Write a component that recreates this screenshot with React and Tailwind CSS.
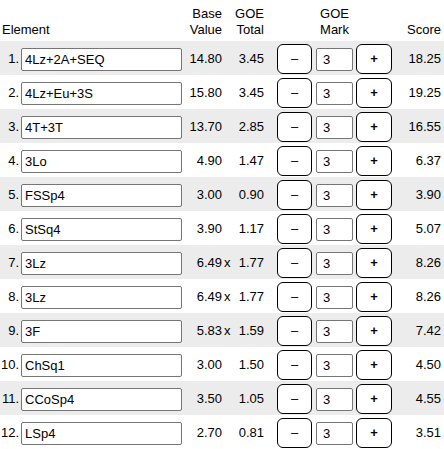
import React from 'react';

const rows = [
    { el: '4Lz+2A+SEQ', base: '14.80', x: false, goe: '3.45', score: '18.25' },
    { el: '4Lz+Eu+3S', base: '15.80', x: false, goe: '3.45', score: '19.25' },
    { el: '4T+3T', base: '13.70', x: false, goe: '2.85', score: '16.55' },
    { el: '3Lo', base: '4.90', x: false, goe: '1.47', score: '6.37' },
    { el: 'FSSp4', base: '3.00', x: false, goe: '0.90', score: '3.90' },
    { el: 'StSq4', base: '3.90', x: false, goe: '1.17', score: '5.07' },
    { el: '3Lz', base: '6.49', x: true, goe: '1.77', score: '8.26' },
    { el: '3Lz', base: '6.49', x: true, goe: '1.77', score: '8.26' },
    { el: '3F', base: '5.83', x: true, goe: '1.59', score: '7.42' },
    { el: 'ChSq1', base: '3.00', x: false, goe: '1.50', score: '4.50' },
    { el: 'CCoSp4', base: '3.50', x: false, goe: '1.05', score: '4.55' },
    { el: 'LSp4', base: '2.70', x: false, goe: '0.81', score: '3.51' },
];

const App = () => {
    return (
        <div className="w-[444px] h-[449px] bg-white text-[13px] text-black font-['Liberation_Sans',Arial,sans-serif] overflow-hidden">
            {/* Header */}
            <div className="flex items-end h-[41px] pb-[3px] leading-[16px]">
                <div className="w-[182px] pl-[2px]">Element</div>
                <div className="w-[40px] text-right">Base<br />Value</div>
                <div className="w-[42px] text-right">GOE<br />Total</div>
                <div className="w-[13px]"></div>
                <div className="w-[115px] text-center">GOE<br />Mark</div>
                <div className="w-[49px] text-right">Score</div>
            </div>

            {rows.map((r, i) => (
                <div key={i} className={`flex items-center h-[34px] pt-[2px] ${i % 2 === 0 ? 'bg-[#ececec]' : 'bg-white'}`}>
                    <div className="w-[19px] text-right">{i + 1}.</div>
                    <input
                        readOnly
                        value={r.el}
                        className="ml-[2px] w-[161px] h-[23px] border border-[#767676] rounded-[2px] bg-white pl-[3px] outline-none"
                    />
                    <div className="w-[40px] text-right">{r.base}</div>
                    <div className="w-[9px] pl-[2px]">{r.x ? 'x' : ''}</div>
                    <div className="w-[33px] text-right">{r.goe}</div>
                    <div className="w-[13px]"></div>
                    <button className="w-[35px] h-[30px] border border-black rounded-[6px] bg-white flex items-center justify-center">–</button>
                    <input
                        readOnly
                        value="3"
                        className="ml-[4px] w-[37px] h-[23px] border border-[#767676] rounded-[2px] bg-white pl-[6px] outline-none"
                    />
                    <button className="ml-[3px] w-[36px] h-[30px] border border-black rounded-[6px] bg-white flex items-center justify-center text-[13px] font-bold">+</button>
                    <div className="w-[49px] text-right">{r.score}</div>
                </div>
            ))}
        </div>
    );
};

export default App;
